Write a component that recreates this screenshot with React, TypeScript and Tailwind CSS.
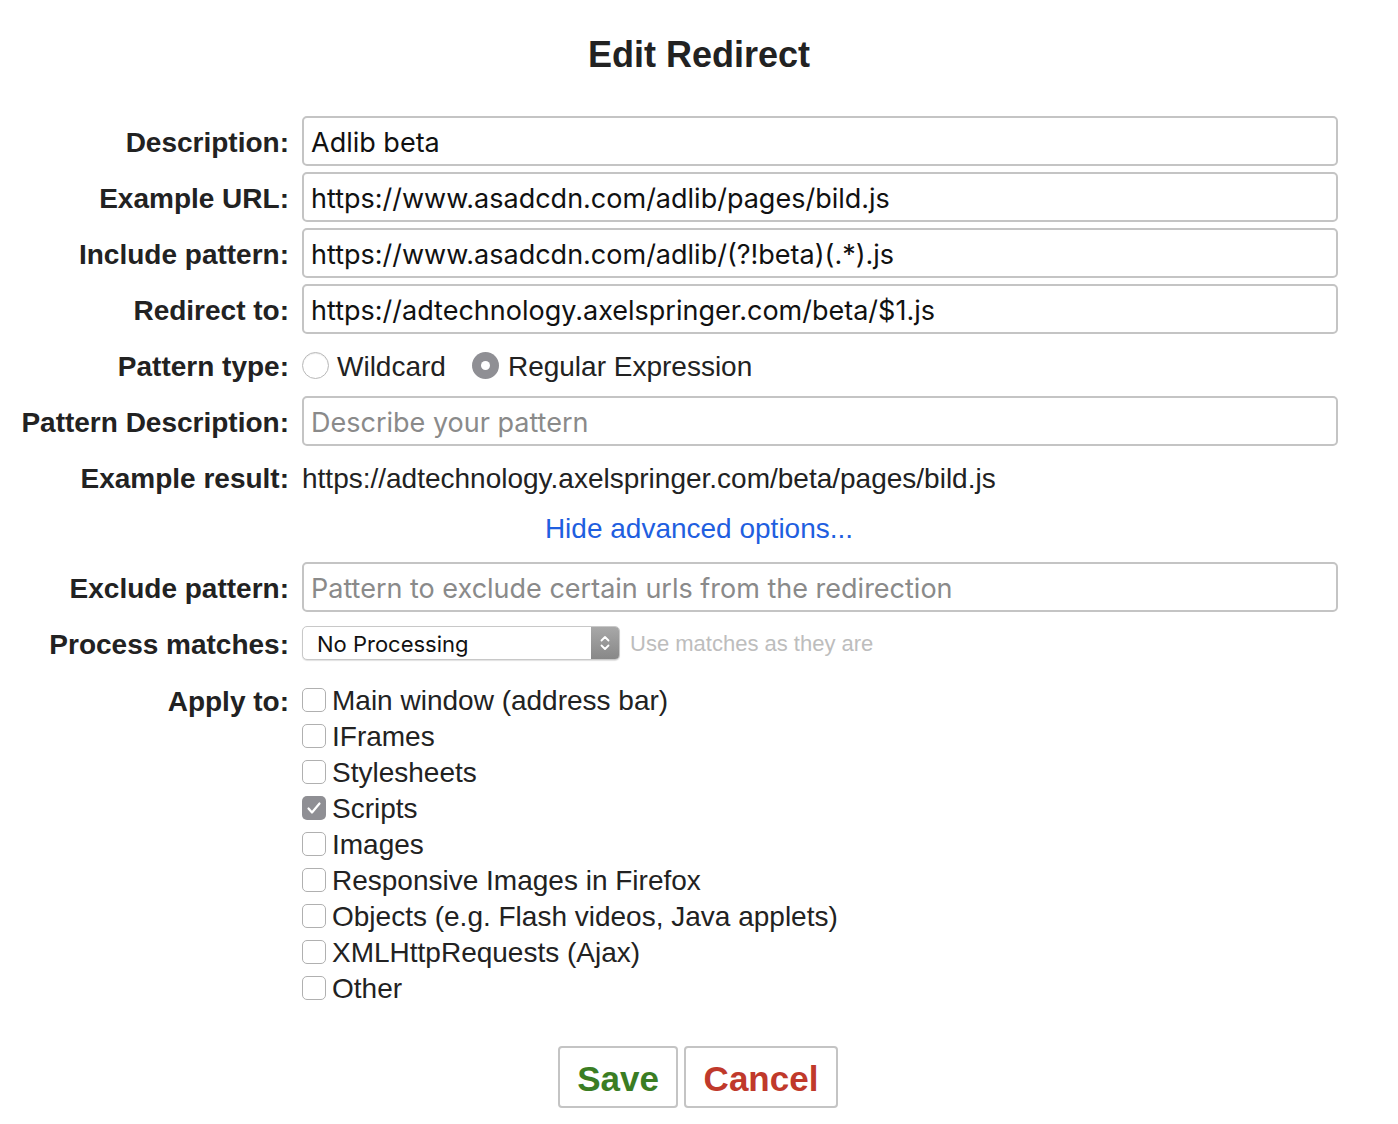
import React from 'react'

const labelCls =
  "pt-[3px] text-right text-[28px] font-bold text-[#222] leading-none whitespace-nowrap font-['Liberation_Sans',Arial,sans-serif]"
const inputCls =
  "w-full h-[50px] rounded-[5px] border-2 border-[#c4c4c4] bg-white px-[7px] pt-[2px] text-[27px] text-[#111] outline-none placeholder:text-[#8a8a8a] font-['Inter','Liberation_Sans',sans-serif]"

function Row({ label, children, h = 'h-[50px]' }: { label: string; children: React.ReactNode; h?: string }) {
  return (
    <div className={`grid grid-cols-[289px_1036px] gap-x-[13px] items-center ${h}`}>
      <div className={labelCls}>{label}</div>
      <div className="flex items-center">{children}</div>
    </div>
  )
}

function Radio({ checked }: { checked?: boolean }) {
  if (checked) {
    return (
      <span className="flex h-[27px] w-[27px] items-center justify-center rounded-full bg-[#8f8f94]">
        <span className="h-[9px] w-[9px] rounded-full bg-white" />
      </span>
    )
  }
  return <span className="h-[27px] w-[27px] rounded-full border border-[#b8b8b8] bg-white shadow-[inset_0_1px_1px_rgba(0,0,0,0.08)]" />
}

function Checkbox({ label, checked }: { label: string; checked?: boolean }) {
  return (
    <div className="flex h-[36px] items-center">
      {checked ? (
        <span className="flex h-[24px] w-[24px] items-center justify-center rounded-[5px] bg-[#8f8f94]">
          <svg width="20" height="20" viewBox="0 0 20 20" fill="none">
            <path d="M4.5 10.5l3.5 4 7.5-9" stroke="white" strokeWidth="2.2" strokeLinecap="round" strokeLinejoin="round" />
          </svg>
        </span>
      ) : (
        <span className="h-[24px] w-[24px] rounded-[5px] border border-[#b0b0b0] bg-white" />
      )}
      <span className="ml-[6px] pt-[2px] text-[28px] leading-none text-[#222] font-['Liberation_Sans',Arial,sans-serif]">
        {label}
      </span>
    </div>
  )
}

export default function App() {
  const applyTo = [
    { label: 'Main window (address bar)' },
    { label: 'IFrames' },
    { label: 'Stylesheets' },
    { label: 'Scripts', checked: true },
    { label: 'Images' },
    { label: 'Responsive Images in Firefox' },
    { label: 'Objects (e.g. Flash videos, Java applets)' },
    { label: 'XMLHttpRequests (Ajax)' },
    { label: 'Other' },
  ]

  return (
    <div className="min-h-[1124px] w-[1398px] bg-white pt-[37px] font-['Liberation_Sans',Arial,sans-serif]">
      <h1 className="text-center text-[36px] font-bold leading-none text-[#222]">Edit Redirect</h1>

      <div className="mt-[43px] flex flex-col gap-[6px]">
        <Row label="Description:">
          <input className={inputCls} defaultValue="Adlib beta" />
        </Row>
        <Row label="Example URL:">
          <input className={inputCls} defaultValue="https://www.asadcdn.com/adlib/pages/bild.js" />
        </Row>
        <Row label="Include pattern:">
          <input className={inputCls} defaultValue="https://www.asadcdn.com/adlib/(?!beta)(.*).js" />
        </Row>
        <Row label="Redirect to:">
          <input className={inputCls} defaultValue="https://adtechnology.axelspringer.com/beta/$1.js" />
        </Row>
        <Row label="Pattern type:">
          <div className="flex items-center text-[28px] leading-none text-[#222]">
            <Radio />
            <span className="ml-[8px] pt-[3px]">Wildcard</span>
            <span className="ml-[26px]">
              <Radio checked />
            </span>
            <span className="ml-[9px] pt-[3px]">Regular Expression</span>
          </div>
        </Row>
        <Row label="Pattern Description:">
          <input className={inputCls} placeholder="Describe your pattern" />
        </Row>
        <Row label="Example result:">
          <span className="pt-[3px] text-[28px] leading-none text-[#222]">
            https://adtechnology.axelspringer.com/beta/pages/bild.js
          </span>
        </Row>
      </div>

      <div className="mt-[6px] flex h-[40px] items-center justify-center pt-[2px]">
        <a href="#" className="text-[28px] leading-none text-[#1f5fe0]">
          Hide advanced options...
        </a>
      </div>

      <div className="mt-[14px] flex flex-col gap-[6px]">
        <Row label="Exclude pattern:">
          <input className={inputCls} placeholder="Pattern to exclude certain urls from the redirection" />
        </Row>
        <Row label="Process matches:">
          <div className="flex items-center">
            <div className="flex h-[34px] w-[318px] overflow-hidden rounded-[5px] border border-[#c8c8c8] bg-white shadow-[0_1px_1px_rgba(0,0,0,0.12)]">
              <span className="flex flex-1 items-center pl-[14px] pt-[2px] text-[22px] leading-none text-[#111] font-['Inter','Liberation_Sans',sans-serif]">
                No Processing
              </span>
              <span className="flex w-[28px] items-center justify-center bg-gradient-to-b from-[#a8a8a8] to-[#888]">
                <svg width="14" height="22" viewBox="0 0 14 22" fill="none">
                  <path d="M3.5 8.5L7 5l3.5 3.5M3.5 13.5L7 17l3.5-3.5" stroke="white" strokeWidth="1.8" strokeLinecap="round" strokeLinejoin="round" />
                </svg>
              </span>
            </div>
            <span className="ml-[10px] pt-[2px] text-[22px] leading-none text-[#bdbdbd]">Use matches as they are</span>
          </div>
        </Row>
      </div>

      <div className="mt-[14px] grid grid-cols-[289px_1036px] gap-x-[13px]">
        <div className="flex h-[36px] items-center justify-end">
          <span className={labelCls}>Apply to:</span>
        </div>
        <div className="flex flex-col">
          {applyTo.map((item) => (
            <Checkbox key={item.label} label={item.label} checked={item.checked} />
          ))}
        </div>
      </div>

      <div className="mt-[40px] flex justify-center gap-[6px] pr-[2px]">
        <button className="h-[62px] w-[120px] rounded-[4px] border-2 border-[#c4c4c4] bg-white pt-[2px] text-[35px] font-bold leading-none text-[#3a7d23]">
          Save
        </button>
        <button className="h-[62px] w-[154px] rounded-[4px] border-2 border-[#c4c4c4] bg-white pt-[2px] text-[35px] font-bold leading-none text-[#c0392b]">
          Cancel
        </button>
      </div>
    </div>
  )
}
